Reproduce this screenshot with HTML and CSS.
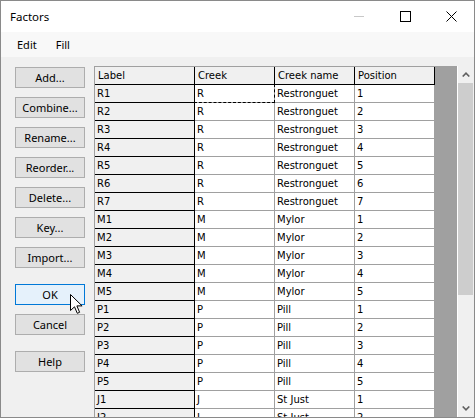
FILE: index.html
```html
<!DOCTYPE html>
<html>
<head>
<meta charset="utf-8">
<link rel="stylesheet" href="styles.css">
</head>
<body>
<div class="window">
  <div class="titlebar">
    <span class="title">Factors</span>
    <div class="controls">
      <span class="ctl"><svg width="10" height="10" viewBox="0 0 10 10"><path d="M0 5.5H10" stroke="#c8c8c8" stroke-width="1"/></svg></span>
      <span class="ctl"><svg width="11" height="11" viewBox="0 0 11 11"><rect x="0.5" y="0.5" width="10" height="10" fill="none" stroke="#000" stroke-width="1"/></svg></span>
      <span class="ctl"><svg width="11" height="11" viewBox="0 0 11 11"><path d="M0.5 0.5L10.5 10.5M10.5 0.5L0.5 10.5" stroke="#000" stroke-width="1"/></svg></span>
    </div>
  </div>
  <div class="menubar"><span class="menu">Edit</span><span class="menu">Fill</span></div>
  <div class="content">
    <div class="buttons">
      <button class="btn">Add...</button>
      <button class="btn">Combine...</button>
      <button class="btn">Rename...</button>
      <button class="btn">Reorder...</button>
      <button class="btn">Delete...</button>
      <button class="btn">Key...</button>
      <button class="btn">Import...</button>
      <button class="btn btn-default gap-lg">OK</button>
      <button class="btn">Cancel</button>
      <button class="btn gap-lg">Help</button>
    </div>
    <div class="sheet-wrap">
      <div class="sheet">
        <div class="row head"><div class="cell lab">Label</div><div class="cell">Creek</div><div class="cell">Creek name</div><div class="cell">Position</div></div>
        <div class="row"><div class="cell lab">R1</div><div class="cell c focus">R</div><div class="cell c">Restronguet</div><div class="cell c">1</div></div>
        <div class="row"><div class="cell lab">R2</div><div class="cell c">R</div><div class="cell c">Restronguet</div><div class="cell c">2</div></div>
        <div class="row"><div class="cell lab">R3</div><div class="cell c">R</div><div class="cell c">Restronguet</div><div class="cell c">3</div></div>
        <div class="row"><div class="cell lab">R4</div><div class="cell c">R</div><div class="cell c">Restronguet</div><div class="cell c">4</div></div>
        <div class="row"><div class="cell lab">R5</div><div class="cell c">R</div><div class="cell c">Restronguet</div><div class="cell c">5</div></div>
        <div class="row"><div class="cell lab">R6</div><div class="cell c">R</div><div class="cell c">Restronguet</div><div class="cell c">6</div></div>
        <div class="row"><div class="cell lab">R7</div><div class="cell c">R</div><div class="cell c">Restronguet</div><div class="cell c">7</div></div>
        <div class="row"><div class="cell lab">M1</div><div class="cell c">M</div><div class="cell c">Mylor</div><div class="cell c">1</div></div>
        <div class="row"><div class="cell lab">M2</div><div class="cell c">M</div><div class="cell c">Mylor</div><div class="cell c">2</div></div>
        <div class="row"><div class="cell lab">M3</div><div class="cell c">M</div><div class="cell c">Mylor</div><div class="cell c">3</div></div>
        <div class="row"><div class="cell lab">M4</div><div class="cell c">M</div><div class="cell c">Mylor</div><div class="cell c">4</div></div>
        <div class="row"><div class="cell lab">M5</div><div class="cell c">M</div><div class="cell c">Mylor</div><div class="cell c">5</div></div>
        <div class="row"><div class="cell lab">P1</div><div class="cell c">P</div><div class="cell c">Pill</div><div class="cell c">1</div></div>
        <div class="row"><div class="cell lab">P2</div><div class="cell c">P</div><div class="cell c">Pill</div><div class="cell c">2</div></div>
        <div class="row"><div class="cell lab">P3</div><div class="cell c">P</div><div class="cell c">Pill</div><div class="cell c">3</div></div>
        <div class="row"><div class="cell lab">P4</div><div class="cell c">P</div><div class="cell c">Pill</div><div class="cell c">4</div></div>
        <div class="row"><div class="cell lab">P5</div><div class="cell c">P</div><div class="cell c">Pill</div><div class="cell c">5</div></div>
        <div class="row"><div class="cell lab">J1</div><div class="cell c">J</div><div class="cell c">St Just</div><div class="cell c">1</div></div>
        <div class="row"><div class="cell lab">J2</div><div class="cell c">J</div><div class="cell c">St Just</div><div class="cell c">2</div></div>
      </div>
      <div class="scrollbar">
        <div class="arrow"><svg width="8" height="5" viewBox="0 0 8 5"><path d="M0.7 4.5L4 1.2L7.3 4.5" fill="none" stroke="#606060" stroke-width="1.6"/></svg></div>
        <div class="thumb"></div>
        <div class="track"></div>
        <div class="arrow"><svg width="8" height="5" viewBox="0 0 8 5"><path d="M0.7 0.5L4 3.8L7.3 0.5" fill="none" stroke="#606060" stroke-width="1.6"/></svg></div>
      </div>
    </div>
  </div>
  <svg class="cursor" width="14" height="21" viewBox="0 0 14 21"><path d="M0.5 0.5V16.5L4.5 12.8L7.3 19.3L9.6 18.3L6.9 11.9H12.1Z" fill="#fff" stroke="#000" stroke-width="1" stroke-linejoin="miter"/></svg>
</div>
</body>
</html>
```

FILE: styles.css
```css
html, body {
  margin: 0;
  padding: 0;
  background: #ffffff;
}

.window {
  position: relative;
  box-sizing: border-box;
  width: 475px;
  height: 418px;
  border: 1px solid #8a8a8a;
  background: #f0f0f0;
  font-family: "Noto Sans", "Open Sans", sans-serif;
  font-size: 11px;
  color: #000;
  display: flex;
  flex-direction: column;
  overflow: hidden;
}

.titlebar {
  height: 31px;
  flex: none;
  background: #ffffff;
  display: flex;
  align-items: center;
  padding-left: 9px;
}

.title {
  flex: 1;
  font-size: 11.5px;
  line-height: 31px;
}

.controls {
  display: flex;
  height: 31px;
}

.ctl {
  width: 46px;
  height: 31px;
  display: flex;
  align-items: center;
  justify-content: center;
}

.ctl svg {
  display: block;
  margin-top: -1px;
}

.menubar {
  height: 25px;
  flex: none;
  background: #f8f8f8;
  display: flex;
  align-items: center;
  padding-left: 16px;
}

.menu {
  margin-right: 19px;
  line-height: 25px;
}

.content {
  flex: 1;
  display: flex;
  padding: 9px 0 0 14px;
  min-height: 0;
}

.buttons {
  width: 70px;
  margin-right: 9px;
  padding-top: 1px;
  display: flex;
  flex-direction: column;
  flex: none;
}

.btn {
  box-sizing: border-box;
  height: 21px;
  width: 70px;
  margin: 0 0 9px 0;
  padding: 0;
  border: 1px solid #adadad;
  background: #e1e1e1;
  font-family: "Noto Sans", "Open Sans", sans-serif;
  font-size: 11px;
  color: #000;
  line-height: 19px;
}

.btn.gap-lg {
  margin-top: 7px;
}

.btn-default {
  background: #e5f1fb;
  border-color: #0078d7;
}

.sheet-wrap {
  flex: 1;
  display: flex;
  min-height: 0;
}

.sheet {
  width: 363px;
  box-sizing: border-box;
  background: #a0a0a0;
  padding: 1px 0 0 1px;
  overflow: hidden;
}

.row {
  display: flex;
  height: 18px;
}

.cell {
  position: relative;
  box-sizing: border-box;
  width: 80px;
  height: 18px;
  padding-left: 2px;
  border-right: 1px solid #a0a0a0;
  border-bottom: 1px solid #a0a0a0;
  font-family: "DejaVu Sans", "Liberation Sans", sans-serif;
  font-size: 10px;
  line-height: 17px;
  white-space: nowrap;
  overflow: hidden;
}

.cell.lab {
  width: 100px;
  background: #f0f0f0;
  border-right-color: #000;
  border-bottom-color: #000;
}

.cell.c {
  background: #ffffff;
}

.head .cell {
  background: #f0f0f0;
  border-right-color: #000;
  border-bottom-color: #000;
  padding-left: 3px;
}

.cell.focus {
  overflow: visible;
}

.cell.focus::after {
  content: "";
  position: absolute;
  left: -1px;
  top: -1px;
  right: -1px;
  bottom: -1px;
  border: 1px dashed #000;
}

.scrollbar {
  width: 17px;
  box-sizing: border-box;
  border-left: 1px solid #ffffff;
  background: #f0f0f0;
  display: flex;
  flex-direction: column;
}

.arrow {
  height: 17px;
  flex: none;
  display: flex;
  align-items: center;
  justify-content: center;
}

.arrow svg {
  display: block;
}

.thumb {
  height: 212px;
  flex: none;
  background: #cdcdcd;
  margin-right: 1px;
}

.track {
  flex: 1;
}

.cursor {
  position: absolute;
  left: 69px;
  top: 293px;
}
```
